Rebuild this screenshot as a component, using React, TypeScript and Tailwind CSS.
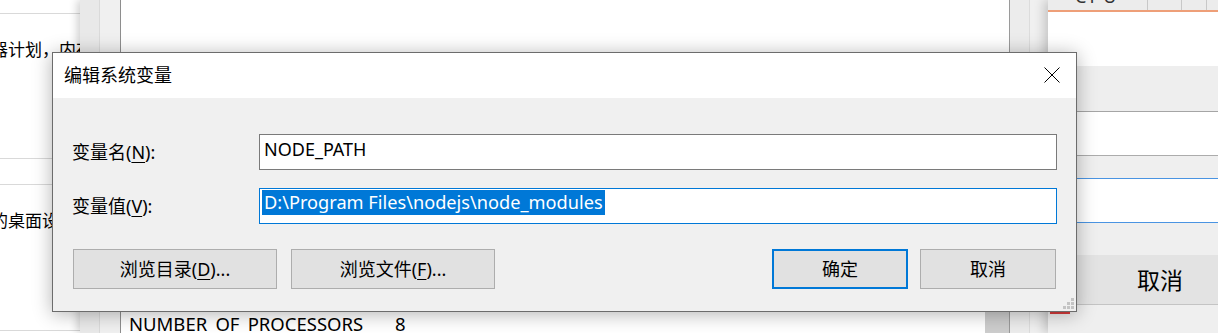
import React from 'react';

const font = "font-['Noto_Sans','Noto_Sans_CJK_SC',sans-serif]";

const LeftWindow: React.FC = () => (
  <div className="absolute left-0 top-0 w-[96px] h-full bg-white text-[17px] leading-[20px] text-black">
    <div className="h-[14px] border-b border-[#d9d9d9]" />
    <div className="h-[145px] border-b border-[#d9d9d9] pt-[26px] whitespace-nowrap -ml-[9px]">器计划，内存</div>
    <div className="h-[26px] border-b border-[#d9d9d9]" />
    <div className="h-[146px] border-b border-[#d9d9d9] pt-[26px] whitespace-nowrap -ml-[9px]">的桌面设置</div>
  </div>
);

const MiddleWindow: React.FC = () => (
  <div className="absolute left-[80px] top-0 w-[968px] h-full flex shadow-[-3px_0_8px_rgba(0,0,0,0.18)]">
    <div className="w-[20px] bg-[#e9e9e9] border-r border-[#dadada]" />
    <div className="w-[21px] bg-[#f0f0f0] border-r border-[#8e8e8e]" />
    <div className="flex-1 bg-white flex">
      <div className="flex-1 pl-[8px] pt-[312px] text-[18.5px] leading-[24px] whitespace-nowrap">
        <span className="inline-block w-[266px]">NUMBER_OF_PROCESSORS</span>
        <span>8</span>
      </div>
      <div className="w-[24px] flex flex-col justify-end">
        <div className="h-[21px] bg-[#cdcdcd]" />
      </div>
    </div>
    <div className="w-[20px] bg-[#ececec] border-l border-[#9a9a9a]" />
    <div className="w-[19px] bg-[#f0f0f0] border-l border-[#dcdcdc]" />
  </div>
);

const RightWindow: React.FC = () => (
  <div className="absolute left-[1048px] top-0 w-[170px] h-full bg-[#efefef] flex flex-col shadow-[-4px_0_10px_rgba(0,0,0,0.18)]">
    <div className="h-[10px] bg-[#ececec] flex overflow-hidden">
      <div className="w-[100px] border-r border-[#c8c8c8] pl-[27px] overflow-hidden">
        <div className="-mt-[15px] text-[18px] leading-[22px] text-[#333] tracking-[3px]">CPU</div>
      </div>
      <div className="w-[34px] border-r border-[#c8c8c8]" />
      <div className="w-[25px] border-r border-[#c8c8c8]" />
    </div>
    <div className="h-[2px] bg-[#ee9f78]" />
    <div className="h-[54px] bg-white" />
    <div className="h-[46px] bg-[#eeeeee] border-b border-[#a5a5a5]" />
    <div className="h-[44px] bg-white border-b border-[#acacac]" />
    <div className="h-[22px]" />
    <div className="h-[45px] bg-white border-y border-[#4a94e2]" />
    <div className="h-[32px]" />
    <div className="h-[50px] bg-[#e3e3e3] border-b border-[#c4c4c4] pl-[89px] flex items-center text-[23px] leading-[30px] text-black">
      取消
    </div>
    <div className="flex-1" />
  </div>
);

const Label: React.FC<{ text: string; hot: string }> = ({ text, hot }) => (
  <div className="w-[187px] shrink-0 text-[18px] leading-[24px] whitespace-nowrap">
    {text}(<span className="underline underline-offset-[3px]">{hot}</span>):
  </div>
);

const Button: React.FC<{ className?: string; children: React.ReactNode }> = ({ className = '', children }) => (
  <div
    className={`h-[40px] bg-[#e1e1e1] flex items-center justify-center text-[18px] leading-[24px] whitespace-nowrap ${className}`}
  >
    {children}
  </div>
);

const Dialog: React.FC = () => (
  <div className="absolute left-[52px] top-[52px] w-[1025px] h-[260px] border border-[#6c6c6c] bg-[#f0f0f0] flex flex-col shadow-[0_2px_18px_rgba(0,0,0,0.3)]">
    <div className="h-[45px] shrink-0 bg-white flex items-center justify-between pl-[11px] pr-[16px]">
      <span className="text-[18px] leading-[24px] -mt-[2px]">编辑系统变量</span>
      <svg width="16" height="16" viewBox="0 0 16 16" className="-mt-[2px]">
        <path d="M0.5 0.5 L15.5 15.5 M15.5 0.5 L0.5 15.5" stroke="#000" strokeWidth="1" fill="none" />
      </svg>
    </div>
    <div className="flex-1 relative pl-[19px] pr-[19px] pt-[36px]">
      <div className="flex items-center">
        <Label text="变量名" hot="N" />
        <div className="flex-1 h-[36px] border border-[#7a7a7a] bg-white pl-[4px] pt-[1px] text-[18px] leading-[26px]">
          NODE_PATH
        </div>
      </div>
      <div className="flex items-center mt-[18px]">
        <Label text="变量值" hot="V" />
        <div className="flex-1 h-[36px] border border-[#0078d7] bg-white pl-[2px] pt-[1px] text-[18.2px] leading-[25px]">
          <span className="bg-[#0078d7] text-white px-[2px] inline-block">{'D:\\Program Files\\nodejs\\node_modules'}</span>
        </div>
      </div>
      <div className="flex mt-[25px] ml-[1px] mr-[1px]">
        <Button className="w-[204px] border border-[#adadad]">
          浏览目录(<span className="underline underline-offset-[3px]">D</span>)...
        </Button>
        <Button className="w-[204px] ml-[14px] border border-[#adadad]">
          浏览文件(<span className="underline underline-offset-[3px]">F</span>)...
        </Button>
        <div className="flex-1" />
        <Button className="w-[136px] border-2 border-[#0078d7]">确定</Button>
        <Button className="w-[136px] ml-[12px] border border-[#adadad]">取消</Button>
      </div>
      <svg width="12" height="12" viewBox="0 0 12 12" className="absolute right-[1px] bottom-[1px]">
        <rect x="8" y="0" width="3" height="3" fill="#c4c4c4" />
        <rect x="4" y="4" width="3" height="3" fill="#c4c4c4" />
        <rect x="8" y="4" width="3" height="3" fill="#c4c4c4" />
        <rect x="0" y="8" width="3" height="3" fill="#c4c4c4" />
        <rect x="4" y="8" width="3" height="3" fill="#c4c4c4" />
        <rect x="8" y="8" width="3" height="3" fill="#c4c4c4" />
      </svg>
    </div>
  </div>
);

export default function App() {
  return (
    <div className={`relative w-[1218px] h-[333px] overflow-hidden bg-white text-black ${font}`}>
      <LeftWindow />
      <MiddleWindow />
      <RightWindow />
      <div className="absolute left-[1050px] top-[309px] w-[20px] h-[5px] bg-[#d83b3b]" />
      <Dialog />
    </div>
  );
}
